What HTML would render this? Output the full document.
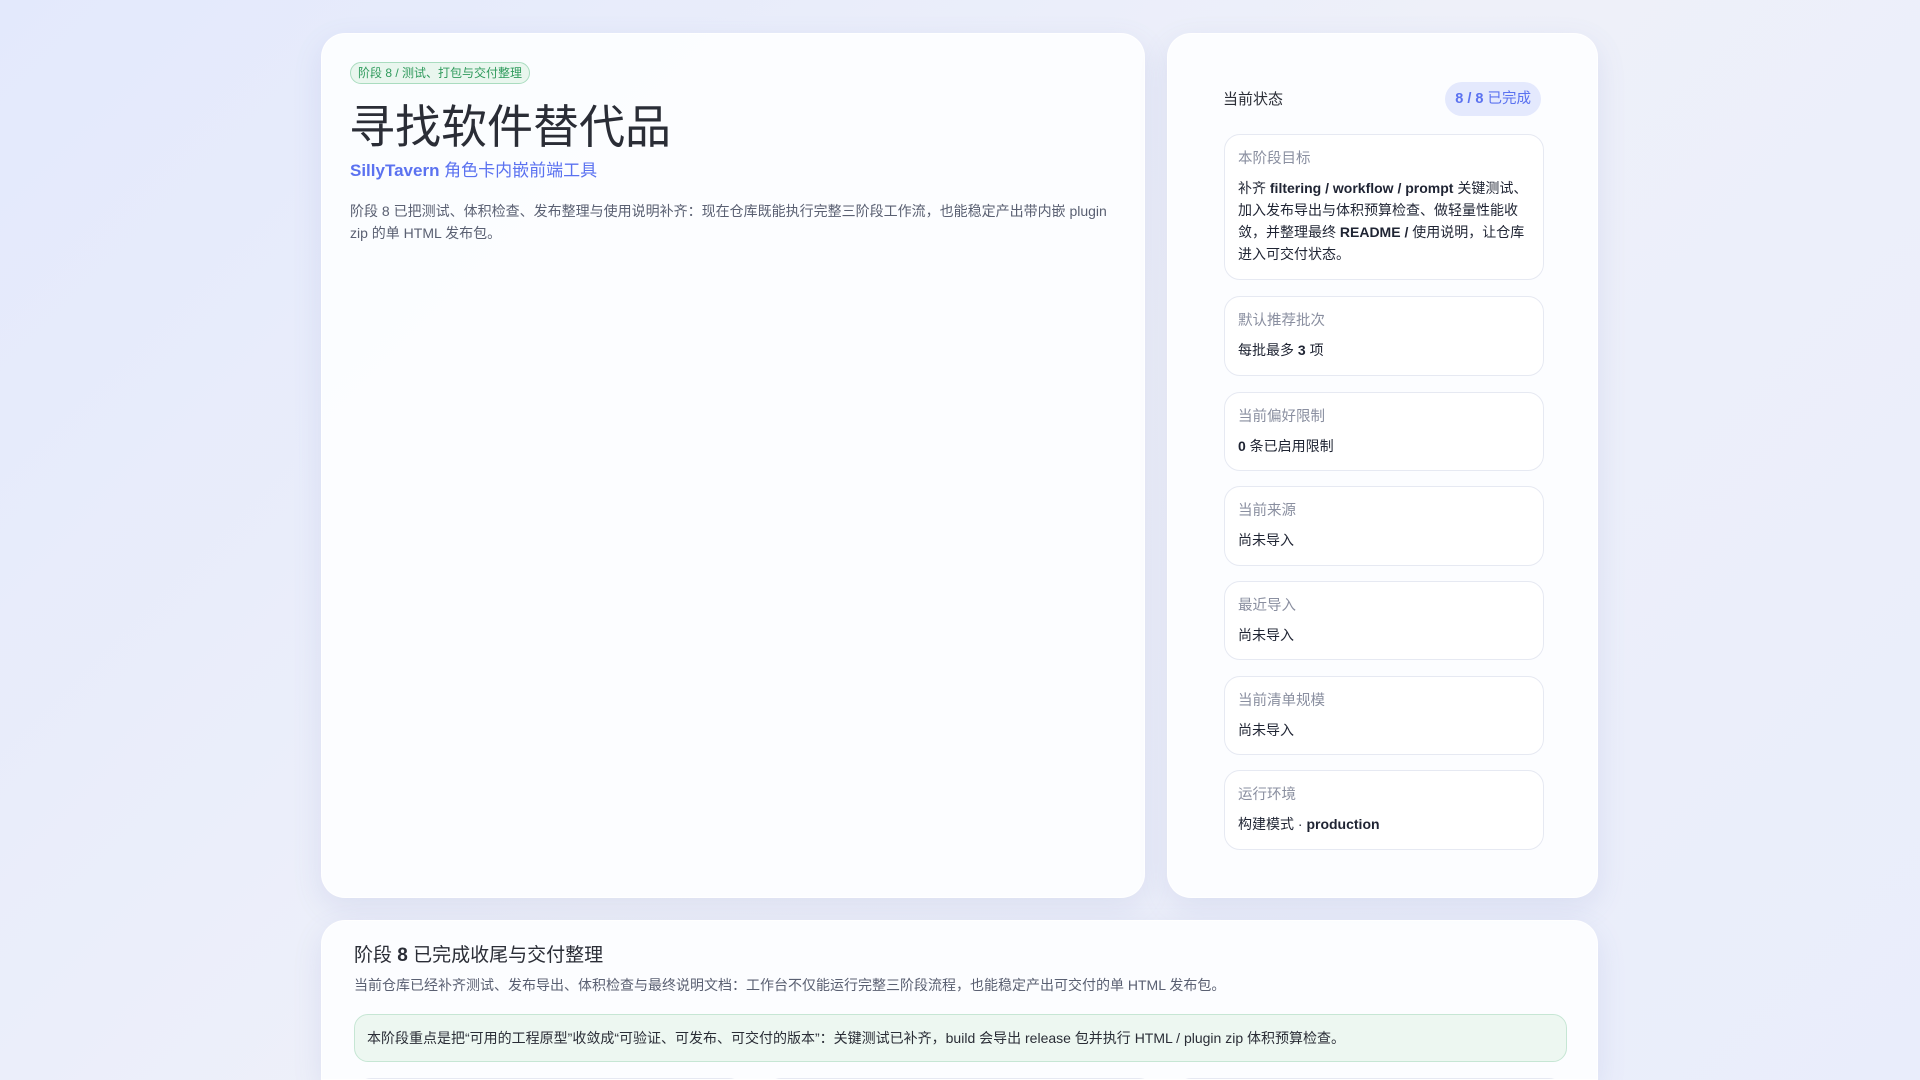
<!DOCTYPE html>
<html><head><meta charset="utf-8"><style>
*{box-sizing:border-box;margin:0;padding:0}
html{width:1920px;height:1080px;overflow:hidden}
body{width:1920px;height:1080px;overflow:hidden;background:linear-gradient(135deg,#e3e9fc,#eef0f9 50%,#e9edfb);font-family:"Liberation Sans","Noto Sans CJK SC",sans-serif;position:relative;color:#1f2433}
.card{position:absolute;background:rgba(252,253,255,0.96);border-radius:24px;box-shadow:0 10px 30px rgba(90,110,180,0.12);border:1px solid rgba(255,255,255,0.9)}
.pill{position:absolute;left:28px;top:28px;height:22px;padding:0 7px;border:1px solid #a9dcbf;background:#e9f6ee;color:#2f9a5c;border-radius:11px;font-size:12px;line-height:20px}
h1{position:absolute;left:27px;top:58px;font-size:46px;font-weight:400;color:#2a2d36;line-height:70px}
.sub{position:absolute;left:28px;top:125px;font-size:17px;color:#5b72f0;line-height:24px}
.desc{position:absolute;left:28px;top:166px;width:770px;font-size:14px;line-height:22px;color:#5a6072}
.box{position:absolute;left:56px;width:320px;border:1px solid #e6e9f2;border-radius:16px;background:#fff;padding:14px 13px}
.lab{font-size:14.5px;color:#8a8fa0;line-height:20px}
.val{font-size:14px;color:#1f2433;line-height:22px;margin-top:8px}
</style></head><body>
<div class="card" style="left:321px;top:33px;width:824px;height:865px">
<div class="pill">阶段 8 / 测试、打包与交付整理</div>
<h1>寻找软件替代品</h1>
<div class="sub"><b>SillyTavern</b> 角色卡内嵌前端工具</div>
<div class="desc">阶段 8 已把测试、体积检查、发布整理与使用说明补齐：现在仓库既能执行完整三阶段工作流，也能稳定产出带内嵌 plugin zip 的单 HTML 发布包。</div>
</div>
<div class="card" style="left:1167px;top:33px;width:431px;height:865px">
<div style="position:absolute;left:55px;top:54px;font-size:15px;line-height:24px;color:#2a2d36">当前状态</div>
<div style="position:absolute;right:56px;top:48px;height:34px;padding:0 10px;border-radius:17px;background:#e4e9fd;color:#5b72f0;font-size:14.5px;line-height:34px"><b>8 / 8</b> 已完成</div>
<div class="box" style="top:100px;height:146px"><div class="lab">本阶段目标</div><div class="val">补齐 <b>filtering / workflow / prompt</b> 关键测试、加入发布导出与体积预算检查、做轻量性能收敛，并整理最终 <b>README /</b> 使用说明，让仓库进入可交付状态。</div></div>
<div class="box" style="top:262px;height:80px"><div class="lab">默认推荐批次</div><div class="val">每批最多 <b>3</b> 项</div></div>
<div class="box" style="top:358px;height:79px"><div class="lab">当前偏好限制</div><div class="val"><b>0</b> 条已启用限制</div></div>
<div class="box" style="top:452px;height:80px"><div class="lab">当前来源</div><div class="val">尚未导入</div></div>
<div class="box" style="top:547px;height:79px"><div class="lab">最近导入</div><div class="val">尚未导入</div></div>
<div class="box" style="top:642px;height:79px"><div class="lab">当前清单规模</div><div class="val">尚未导入</div></div>
<div class="box" style="top:736px;height:80px"><div class="lab">运行环境</div><div class="val">构建模式 · <b>production</b></div></div>
</div>
<div class="card" style="left:321px;top:920px;width:1277px;height:160px;border-bottom-left-radius:0;border-bottom-right-radius:0;overflow:hidden">
<div style="position:absolute;left:32px;top:22px;font-size:19px;line-height:26px;color:#2a2d36">阶段 <b>8</b> 已完成收尾与交付整理</div>
<div style="position:absolute;left:32px;top:53px;font-size:14px;line-height:22px;color:#5a6072">当前仓库已经补齐测试、发布导出、体积检查与最终说明文档：工作台不仅能运行完整三阶段流程，也能稳定产出可交付的单 HTML 发布包。</div>
<div style="position:absolute;left:32px;top:93px;width:1213px;height:48px;border:1px solid #c6e6d4;background:#edf7f1;border-radius:14px;padding:0 12px;font-size:14px;line-height:46px;color:#2a2d36">本阶段重点是把“可用的工程原型”收敛成“可验证、可发布、可交付的版本”：关键测试已补齐，build 会导出 release 包并执行 HTML / plugin zip 体积预算检查。</div>
<div style="position:absolute;left:34px;top:157px;width:388px;height:30px;border:1px solid #e6e9f2;border-radius:16px;background:#fff"></div>
<div style="position:absolute;left:444px;top:157px;width:388px;height:30px;border:1px solid #e6e9f2;border-radius:16px;background:#fff"></div>
<div style="position:absolute;left:854px;top:157px;width:388px;height:30px;border:1px solid #e6e9f2;border-radius:16px;background:#fff"></div>
</div>
</body></html>
